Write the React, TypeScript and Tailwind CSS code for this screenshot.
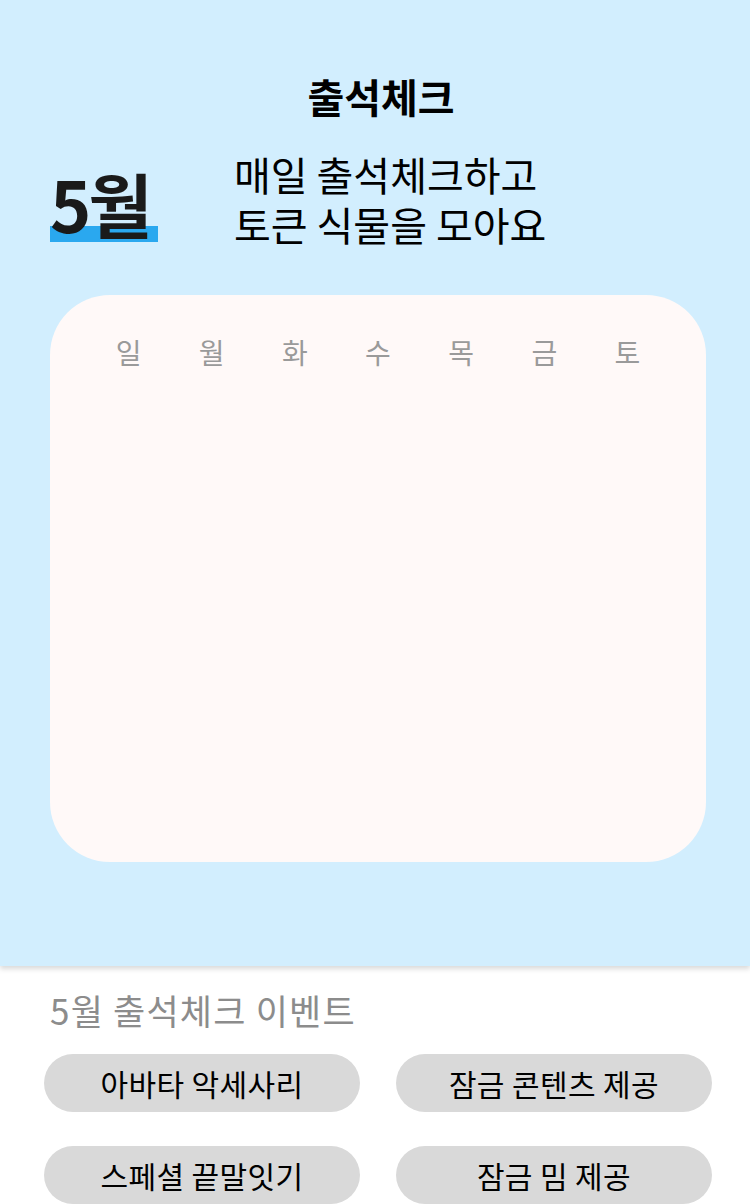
const days = ["일", "월", "화", "수", "목", "금", "토"];
const rewards = ["아바타 악세사리", "잠금 콘텐츠 제공", "스페셜 끝말잇기", "잠금 밈 제공"];

export default function App() {
  return (
    <div
      className="w-[750px] h-[1204px] overflow-hidden bg-white"
      style={{ fontFamily: '"Noto Sans CJK KR", "Noto Sans", sans-serif' }}
    >
      <div className="h-[966px] bg-[#d2eefe] shadow-[0_3px_5px_rgba(0,0,0,0.15)] relative z-10 flex flex-col">
        <h1 className="mt-[69px] pl-[12px] text-center text-[40px] leading-[54px] font-bold text-black">출석체크</h1>
        <div className="mt-[20px] flex items-center">
          <div className="ml-[50px] relative w-[108px] h-[90px]">
            <div className="absolute left-0 bottom-[-1px] w-[108px] h-[16px] bg-[#2aa8ef]" />
            <span className="absolute left-0 bottom-[-7px] text-[70px] leading-[90px] font-bold text-[#1a1a1a] tracking-[-3px]">5월</span>
          </div>
          <div className="ml-[76px] mt-[6px] text-[40px] leading-[50px] text-black">
            <p>매일 출석체크하고</p>
            <p>토큰 식물을 모아요</p>
          </div>
        </div>
        <div className="ml-[50px] w-[656px] mt-[46px] h-[567px] rounded-[60px] bg-[#fff9f8] px-[37px] pt-[37px]">
          <div className="grid grid-cols-7">
            {days.map((d) => (
              <div key={d} className="text-center text-[28px] leading-[40px] text-[#9a9a9a]">
                {d}
              </div>
            ))}
          </div>
        </div>
      </div>
      <div className="ml-[44px] w-[668px]">
        <p className="mt-[22px] ml-[6px] text-[35px] leading-[44px] tracking-[1.2px] text-[#8c8c8c]">5월 출석체크 이벤트</p>
        <div className="mt-[22px] grid grid-cols-2 gap-x-[36px] gap-y-[34px]">
          {rewards.map((r) => (
            <div
              key={r}
              className="h-[58px] rounded-full bg-[#d9d9d9] flex items-center justify-center text-[30px] tracking-[0.4px] text-black"
            >
              {r}
            </div>
          ))}
        </div>
      </div>
    </div>
  );
}
